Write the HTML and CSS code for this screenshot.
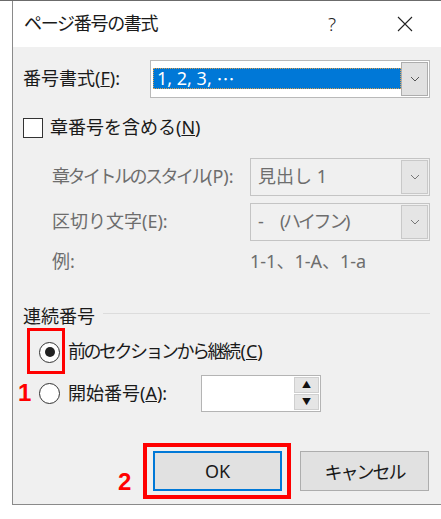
FILE: index.html
```html
<!DOCTYPE html>
<html lang="ja">
<head>
    <meta charset="UTF-8">
    <title>ページ番号の書式</title>
    <link rel="stylesheet" href="styles.css">
</head>
<body>
    <div class="dialog">
        <div class="titlebar">
            <span class="title">ページ番号の書式</span>
            <span class="help">?</span>
            <svg class="close" width="16" height="16" viewBox="0 0 16 16"><path d="M1 1L15 15M15 1L1 15" stroke="#222" stroke-width="1.1" fill="none"/></svg>
        </div>
        <div class="content">
            <div class="row format-row">
                <label class="label-main">番号書式(<u>F</u>):</label>
                <div class="select select-main">
                    <div class="select-value"><span class="highlight">1, 2, 3, <span class="ellipsis">…</span></span></div>
                    <div class="drop"><svg width="10" height="6" viewBox="0 0 10 6"><path d="M1 1L5 5L9 1" stroke="#555" fill="none"/></svg></div>
                </div>
            </div>
            <div class="row check-row">
                <span class="checkbox"></span>
                <span>章番号を含める(<u>N</u>)</span>
            </div>
            <div class="row sub-row chapter-row">
                <label class="label-sub"><span class="tight">章タイトルのスタイル</span>(P):</label>
                <div class="select select-sub">
                    <div class="select-value">見出し 1</div>
                    <div class="drop"><svg width="10" height="6" viewBox="0 0 10 6"><path d="M1 1L5 5L9 1" stroke="#777" fill="none"/></svg></div>
                </div>
            </div>
            <div class="row sub-row sep-row">
                <label class="label-sub">区切り文字(E):</label>
                <div class="select select-sub">
                    <div class="select-value"><span class="dash">-</span><span class="tight">(ハイフン)</span></div>
                    <div class="drop"><svg width="10" height="6" viewBox="0 0 10 6"><path d="M1 1L5 5L9 1" stroke="#777" fill="none"/></svg></div>
                </div>
            </div>
            <div class="row sub-row example-row">
                <label class="label-sub">例:</label>
                <span class="example">1-1、1-A、1-a</span>
            </div>
            <div class="row group-row">
                <span>連続番号</span>
                <span class="group-line"></span>
            </div>
            <div class="row radio-row radio-first">
                <span class="mark-box mark-1"></span>
                <span class="radio checked"></span>
                <span><span class="tight tight-end">前のセクションから継続</span>(<u>C</u>)</span>
            </div>
            <div class="row radio-row radio-second">
                <span class="step step-1">1</span>
                <span class="radio"></span>
                <span class="start-label">開始番号(<u>A</u>):</span>
                <div class="spin">
                    <div class="spin-input"></div>
                    <div class="spin-buttons">
                        <div class="spin-btn">▲</div>
                        <div class="spin-btn">▼</div>
                    </div>
                </div>
            </div>
            <div class="row button-row">
                <span class="step step-2">2</span>
                <span class="mark-box mark-2"></span>
                <button class="btn btn-ok">OK</button>
                <button class="btn btn-cancel">キャンセル</button>
            </div>
        </div>
    </div>
</body>
</html>
```

FILE: styles.css
```css
body {
    margin: 0;
    background: #fff;
    font-family: "Noto Sans", "Noto Sans CJK JP", sans-serif;
    font-size: 18px;
    line-height: 1.2;
    color: #1a1a1a;
    overflow: hidden;
    border-top: 1px solid #6b6b6b;
}
.dialog {
    margin-left: 12px;
    border-left: 1px solid #8a8a8a;
    border-bottom: 1px solid #8a8a8a;
    background: #f0f0f0;
}
.titlebar {
    height: 46px;
    background: #fff;
    display: flex;
    align-items: center;
    padding-left: 11px;
}
.title {
    font-size: 18px;
    letter-spacing: -1.3px;
    flex: 1;
}
.help {
    font-size: 19px;
    font-weight: 300;
    margin-right: 61px;
    color: #222;
}
.close {
    margin-right: 28px;
}
.content {
    padding: 13px 11px 13px 10px;
}
.row {
    display: flex;
    align-items: center;
    position: relative;
}
.tight {
    letter-spacing: -2.5px;
}
.tight-end {
    margin-right: 2px;
}
.format-row {
    height: 38px;
}
.label-main {
    width: 127px;
}
.select {
    height: 38px;
    box-sizing: border-box;
    border: 1px solid #c4c4c4;
    display: flex;
    align-items: stretch;
    padding: 1px;
}
.select-main {
    width: 280px;
    background: #fff;
    border-color: #b9b9b9;
}
.select-value {
    flex: 1;
    display: flex;
    align-items: center;
    padding-left: 6px;
}
.select-main .select-value {
    padding: 6px 0 7px 1px;
}
.highlight {
    display: flex;
    align-items: center;
    width: 100%;
    height: 100%;
    box-sizing: border-box;
    background: #0078d7;
    color: #fff;
    padding-left: 4px;
    white-space: pre;
    outline: 1px dotted #d9a050;
    outline-offset: -1px;
}
.ellipsis {
    font-family: "Noto Sans CJK JP", sans-serif;
}
.dash {
    width: 22px;
}
.drop {
    width: 25px;
    border: 1px solid #c8c8c8;
    background: #e5e5e5;
    display: flex;
    align-items: center;
    justify-content: center;
}
.select-main .drop {
    border-color: #adadad;
    background: #e1e1e1;
}
.check-row {
    margin-top: 20px;
    height: 20px;
    gap: 7px;
}
.checkbox {
    width: 18px;
    height: 18px;
    border: 1px solid #333;
    background: #fff;
}
.sub-row {
    padding-left: 29px;
    color: #6d6d6d;
}
.label-sub {
    width: 198px;
}
.select-sub {
    width: 180px;
    color: #6d6d6d;
}
.chapter-row {
    margin-top: 20px;
}
.sep-row {
    margin-top: 7px;
}
.example-row {
    margin-top: 11px;
    height: 20px;
}
.group-row {
    margin-top: 35px;
    height: 20px;
    gap: 8px;
}
.group-line {
    flex: 1;
    height: 1px;
    background: #dcdcdc;
    margin-top: -7px;
}
.radio-row {
    padding-left: 16px;
    gap: 8px;
}
.radio-first {
    margin-top: 13px;
    height: 24px;
}
.radio-second {
    margin-top: 11px;
    height: 37px;
}
.radio {
    width: 19px;
    height: 19px;
    border: 1px solid #333;
    border-radius: 50%;
    background: #fff;
    display: flex;
    align-items: center;
    justify-content: center;
}
.radio.checked::after {
    content: "";
    width: 10px;
    height: 10px;
    border-radius: 50%;
    background: #222;
}
.mark-box {
    position: absolute;
    border: 3px solid #f00;
    box-sizing: border-box;
}
.mark-1 {
    left: 4px;
    top: -12px;
    width: 38px;
    height: 46px;
}
.step {
    position: absolute;
    color: #f00;
    font-family: "Liberation Sans", sans-serif;
    font-weight: bold;
    font-size: 24px;
}
.step-1 {
    left: -5px;
    top: 4px;
}
.start-label {
    width: 125px;
}
.spin {
    display: flex;
    width: 120px;
    height: 37px;
    box-sizing: border-box;
    border: 1px solid #b4b4b4;
    background: #fff;
    padding: 1px;
}
.spin-input {
    flex: 1;
}
.spin-buttons {
    width: 25px;
    display: flex;
    flex-direction: column;
    gap: 1px;
}
.spin-btn {
    flex: 1;
    background: #e5e5e5;
    border: 1px solid #cfcfcf;
    font-size: 9px;
    display: flex;
    align-items: center;
    justify-content: center;
    color: #111;
}
.button-row {
    margin-top: 39px;
    height: 40px;
    justify-content: flex-end;
    gap: 18px;
    padding-right: 1px;
}
.btn {
    width: 129px;
    height: 40px;
    background: #e1e1e1;
    border: 1px solid #adadad;
    font-family: "Noto Sans", "Noto Sans CJK JP", sans-serif;
    font-size: 18px;
    color: #1a1a1a;
    padding: 0;
}
.btn-cancel {
    letter-spacing: -2px;
}
.btn-ok {
    border: 2px solid #0078d7;
}
.mark-2 {
    border-width: 4px;
    left: 120px;
    top: -8px;
    width: 148px;
    height: 56px;
}
.step-2 {
    left: 95px;
    top: 17px;
}
```
